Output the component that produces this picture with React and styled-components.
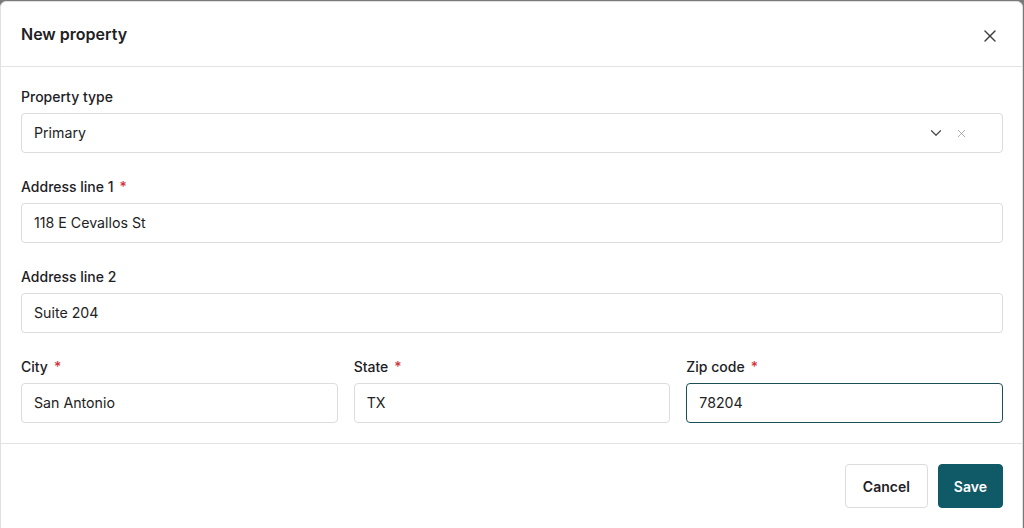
import React from "react";
import styled, { createGlobalStyle } from "styled-components";
import { ChevronDown, X } from "lucide-react";

const GlobalStyle = createGlobalStyle`
  html, body {
    margin: 0;
    padding: 0;
    height: 100%;
    background: #7a7a7a;
    font-family: Inter, "Noto Sans", Arial, sans-serif;
    color: #1d2125;
  }
  * { box-sizing: border-box; }
`;

const Dialog = styled.div`
  margin: 1px 1px 0 0;
  width: 1023px;
  height: 540px;
  background: white;
  border: 1px solid #e0e0e0;
  border-radius: 6px;
  display: flex;
  flex-direction: column;
`;

const Header = styled.div`
  display: flex;
  align-items: center;
  justify-content: space-between;
  height: 65px;
  padding: 0 22px 0 20px;
  border-bottom: 1px solid #e3e3e3;
`;

const Title = styled.h2`
  margin: 0;
  font-size: 16px;
  font-weight: 600;
  color: #1d2125;
`;

const CloseButton = styled.button`
  border: none;
  background: none;
  padding: 0;
  margin-top: 3px;
  display: flex;
  color: #3c3c3c;
  cursor: pointer;
`;

const Body = styled.div`
  display: flex;
  flex-direction: column;
  gap: 24px;
  padding: 20px 19px 20px 20px;
  border-bottom: 1px solid #e3e3e3;
`;

const Row = styled.div`
  display: grid;
  grid-template-columns: repeat(3, 1fr);
  gap: 16px;
`;

const Field = styled.div`
  display: flex;
  flex-direction: column;
  gap: 6px;
`;

const Label = styled.label`
  font-size: 14px;
  font-weight: 500;
  line-height: 20px;
  color: #1d2125;
`;

const Star = styled.span`
  color: #d0343c;
  margin-left: 6px;
`;

const Input = styled.div`
  height: 40px;
  display: flex;
  align-items: center;
  padding: 0 34px 0 12px;
  border: 1px solid ${(p) => (p.focused ? "#1b4f58" : "#dcdcdc")};
  border-radius: 4px;
  font-size: 14.2px;
  line-height: 18px;
  color: #222;
`;

const Value = styled.span`
  flex: 1;
  margin-top: -1px;
`;

const Icons = styled.span`
  display: flex;
  align-items: center;
  gap: 10px;
  color: #4a4a4a;
`;

const Footer = styled.div`
  display: flex;
  justify-content: flex-end;
  gap: 10px;
  padding: 20px 19px;
`;

const Button = styled.button`
  height: 44px;
  padding: 0 ${(p) => (p.primary ? "15px" : "17px")};
  border-radius: 4px;
  font-family: inherit;
  font-size: 14px;
  font-weight: 600;
  cursor: pointer;
  border: 1px solid ${(p) => (p.primary ? "#0f5a66" : "#dcdcdc")};
  background: ${(p) => (p.primary ? "#0f5a66" : "white")};
  color: ${(p) => (p.primary ? "white" : "#1d2125")};
`;

function FormField({ label, required, value, focused, children }) {
  return (
    <Field>
      <Label>
        {label}
        {required && <Star>*</Star>}
      </Label>
      <Input focused={focused}>
        <Value>{value}</Value>
        {children}
      </Input>
    </Field>
  );
}

export default function App() {
  return (
    <>
      <GlobalStyle />
      <Dialog>
        <Header>
          <Title>New property</Title>
          <CloseButton>
            <X size={20} strokeWidth={1.6} />
          </CloseButton>
        </Header>
        <Body>
          <FormField label="Property type" value="Primary">
            <Icons>
              <ChevronDown size={18} strokeWidth={1.6} />
              <X size={13} strokeWidth={1.3} color="#8a8a8a" />
            </Icons>
          </FormField>
          <FormField label="Address line 1" required value="118 E Cevallos St" />
          <FormField label="Address line 2" value="Suite 204" />
          <Row>
            <FormField label="City" required value="San Antonio" />
            <FormField label="State" required value="TX" />
            <FormField label="Zip code" required value="78204" focused />
          </Row>
        </Body>
        <Footer>
          <Button>Cancel</Button>
          <Button primary>Save</Button>
        </Footer>
      </Dialog>
    </>
  );
}
